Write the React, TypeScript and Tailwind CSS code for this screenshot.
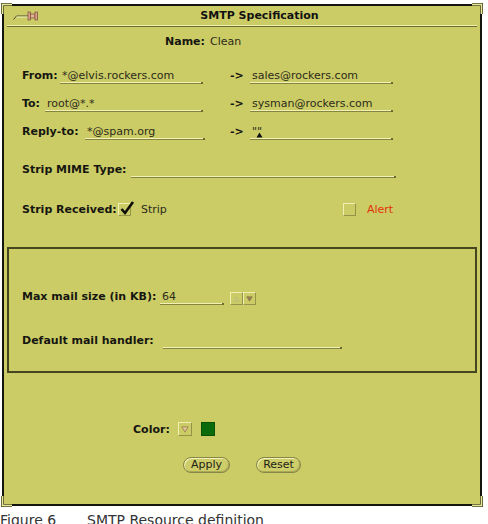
import React from "react";

type FieldProps = { w: string; text?: string; caret?: boolean };

// Underlined text field: light rule over a dark one, with a small end cap.
function Field({ w, text = "", caret = false }: FieldProps) {
  return (
    <div className={`relative flex flex-col shrink-0 ${w}`}>
      <div className="h-[13px] pl-[2px] leading-[13px] text-[11px] text-[#2b2b1a] whitespace-nowrap">
        {text}
      </div>
      <div className="h-px bg-[#f1f1b4]" />
      <div className="h-px bg-[#858540]" />
      <div className="absolute right-0 bottom-0 w-[2px] h-[2px] bg-[#6a6a30]" />
      {caret && (
        <svg className="absolute left-[6px] top-[7px]" width="7" height="6" viewBox="0 0 7 6">
          <path d="M3.5 0.5 L6.5 5.5 L0.5 5.5 Z" fill="#111" />
        </svg>
      )}
    </div>
  );
}

function Label({ w, children }: { w: string; children: React.ReactNode }) {
  return (
    <div className={`shrink-0 h-[13px] leading-[13px] text-[11px] font-bold text-[#161610] whitespace-nowrap ${w}`}>
      {children}
    </div>
  );
}

function Arrow() {
  return (
    <div className="w-[20px] shrink-0 h-[13px] leading-[13px] text-[11px] font-bold text-[#161610]">-&gt;</div>
  );
}

function Pushpin() {
  return (
    <svg className="ml-[9px] shrink-0" width="26" height="10" viewBox="0 0 26 10">
      <path d="M0.5 8.5 L3.5 5 L15 5" stroke="#4a4a35" strokeWidth="1" fill="none" />
      <path d="M3.5 6 L15 6" stroke="#f0f0b8" strokeWidth="1" fill="none" />
      <rect x="15" y="1" width="2.5" height="8" fill="#d9a385" stroke="#7a4a38" strokeWidth="0.7" />
      <rect x="17.5" y="3" width="4.5" height="4" fill="#e2b396" stroke="#7a4a38" strokeWidth="0.7" />
      <rect x="22" y="1" width="2.5" height="8" fill="#d9a385" stroke="#7a4a38" strokeWidth="0.7" />
    </svg>
  );
}

// Resize handles drawn over the window frame corners.
function Corners() {
  return (
    <>
      <svg className="absolute left-[-3px] top-[-3px]" width="12" height="12" viewBox="0 0 12 12">
        <path d="M1.5 11 L1.5 1.5 L11 1.5" stroke="#4a4a24" strokeWidth="3" fill="none" />
        <path d="M1.5 11 L1.5 1.5 L11 1.5" stroke="#e9e99c" strokeWidth="1.4" fill="none" />
      </svg>
      <svg className="absolute right-[-3px] top-[-3px]" width="12" height="12" viewBox="0 0 12 12">
        <path d="M1 1.5 L10.5 1.5 L10.5 11" stroke="#4a4a24" strokeWidth="3" fill="none" />
        <path d="M1 1.5 L10.5 1.5 L10.5 11" stroke="#e9e99c" strokeWidth="1.4" fill="none" />
      </svg>
      <svg className="absolute left-[-3px] bottom-[-3px]" width="12" height="12" viewBox="0 0 12 12">
        <path d="M1.5 1 L1.5 10.5 L11 10.5" stroke="#4a4a24" strokeWidth="3" fill="none" />
        <path d="M1.5 1 L1.5 10.5 L11 10.5" stroke="#e9e99c" strokeWidth="1.4" fill="none" />
      </svg>
      <svg className="absolute right-[-3px] bottom-[-3px]" width="12" height="12" viewBox="0 0 12 12">
        <path d="M10.5 1 L10.5 10.5 L1 10.5" stroke="#4a4a24" strokeWidth="3" fill="none" />
        <path d="M10.5 1 L10.5 10.5 L1 10.5" stroke="#e9e99c" strokeWidth="1.4" fill="none" />
      </svg>
    </>
  );
}

const bevel =
  "border border-t-[#f0f0b2] border-l-[#f0f0b2] border-b-[#949448] border-r-[#949448]";

function CheckBox({ checked }: { checked: boolean }) {
  return (
    <div className={`relative w-[13px] h-[13px] shrink-0 ${bevel}`}>
      {checked && (
        <svg className="absolute left-[0px] top-[-4px]" width="16" height="16" viewBox="0 0 16 16">
          <path d="M2.5 9 L6 13 L14 2" stroke="#0d0d0a" strokeWidth="2.6" fill="none" strokeLinejoin="miter" />
        </svg>
      )}
    </div>
  );
}

function OvalButton({ w, children }: { w: string; children: React.ReactNode }) {
  return (
    <button
      className={`${w} h-[16px] rounded-full border border-[#86864a] bg-[#cdcd6a] shadow-[inset_1px_1px_0_#f2f2b6,inset_-1px_-1px_0_#a9a955] text-[11px] leading-[14px] text-[#1e1e16]`}
    >
      {children}
    </button>
  );
}

export default function App() {
  return (
    <div className="w-[488px] h-[524px] bg-white overflow-hidden font-['DejaVu_Sans',sans-serif]">
      <div className="relative ml-[2px] mt-[4px] w-[480px] h-[502px] border-2 border-[#151510] bg-[#cccc66] flex flex-col">
        <Corners />

        {/* Title bar */}
        <div className="h-[19px] flex items-center">
          <Pushpin />
          <div className="flex-1 text-center text-[11px] leading-[13px] font-bold text-[#111]">SMTP Specification</div>
        </div>
        <div className="mx-[3px] h-px bg-[#efefae]" />
        <div className="mx-[3px] h-px bg-[#6b6b2e]" />

        {/* Name */}
        <div className="mt-[8px] pl-[161px] flex items-start gap-[5px]">
          <Label w="">Name:</Label>
          <div className="h-[13px] leading-[13px] text-[11px] text-[#2b2b1a]">Clean</div>
        </div>

        {/* Address mappings */}
        <div className="mt-[21px] pl-[18px] flex items-start">
          <div className="w-[208px] shrink-0 flex items-start">
            <Label w="w-[38px]">From:</Label>
            <Field w="w-[143px]" text="*@elvis.rockers.com" />
          </div>
          <Arrow />
          <Field w="w-[143px]" text="sales@rockers.com" />
        </div>

        <div className="mt-[13px] pl-[18px] flex items-start">
          <div className="w-[208px] shrink-0 flex items-start">
            <Label w="w-[23px]">To:</Label>
            <Field w="w-[158px]" text="root@*.*" />
          </div>
          <Arrow />
          <Field w="w-[143px]" text="sysman@rockers.com" />
        </div>

        <div className="mt-[13px] pl-[18px] flex items-start">
          <div className="w-[208px] shrink-0 flex items-start">
            <Label w="w-[63px]">Reply-to:</Label>
            <Field w="w-[120px]" text="*@spam.org" />
          </div>
          <Arrow />
          <Field w="w-[143px]" text={'""'} caret />
        </div>

        {/* Strip MIME type */}
        <div className="mt-[23px] pl-[18px] flex items-start">
          <Label w="w-[109px]">Strip MIME Type:</Label>
          <Field w="w-[265px]" />
        </div>

        {/* Strip received */}
        <div className="mt-[25px] pl-[18px] flex items-center h-[13px]">
          <div className="w-[321px] shrink-0 flex items-center">
            <Label w="w-[96px]">Strip Received:</Label>
            <CheckBox checked />
            <div className="ml-[10px] text-[11px] leading-[13px] text-[#2b2b1a]">Strip</div>
          </div>
          <CheckBox checked={false} />
          <div className="ml-[11px] text-[11px] leading-[13px] text-[#e0330d]">Alert</div>
        </div>

        {/* Size / handler group */}
        <div className="mt-[31px] mx-[3px] h-[126px] border-2 border-[#45451f] flex flex-col pl-[13px]">
          <div className="mt-[41px] flex items-start">
            <Label w="w-[138px]">Max mail size (in KB):</Label>
            <Field w="w-[64px]" text="64" />
            <div className="ml-[6px] mt-[2px] flex">
              <div className={`w-[13px] h-[13px] flex items-center justify-center ${bevel}`}>
                <svg width="7" height="6" viewBox="0 0 7 6">
                  <path d="M3.5 0.8 L6.2 5.2 L0.8 5.2 Z" fill="none" stroke="#b7b780" strokeWidth="0.8" />
                </svg>
              </div>
              <div className={`w-[13px] h-[13px] flex items-center justify-center ${bevel}`}>
                <svg width="7" height="6" viewBox="0 0 7 6">
                  <path d="M0.8 0.8 L6.2 0.8 L3.5 5.2 Z" fill="#9a8258" stroke="#7d6440" strokeWidth="0.6" />
                </svg>
              </div>
            </div>
          </div>
          <div className="mt-[29px] flex items-start">
            <Label w="w-[141px]">Default mail handler:</Label>
            <Field w="w-[179px]" />
          </div>
        </div>

        {/* Color */}
        <div className="mt-[49px] pl-[129px] flex items-center h-[14px]">
          <Label w="w-[45px]">Color:</Label>
          <div className={`w-[14px] h-[14px] flex items-center justify-center ${bevel}`}>
            <svg width="8" height="7" viewBox="0 0 8 7">
              <path d="M0.8 0.8 L7.2 0.8 L4 6.2 Z" fill="#dcc58e" stroke="#9a7c55" strokeWidth="0.8" />
            </svg>
          </div>
          <div className="ml-[9px] w-[14px] h-[14px] bg-[#0b6b0b] border border-[#075207]" />
        </div>

        {/* Actions */}
        <div className="mt-[21px] pl-[179px] flex items-center gap-[26px]">
          <OvalButton w="w-[47px]">Apply</OvalButton>
          <OvalButton w="w-[45px]">Reset</OvalButton>
        </div>
      </div>

      <div className="mt-[6px] flex text-[14px] leading-[16px] text-[#333]">
        <div className="w-[87px] shrink-0">Figure 6</div>
        <div>SMTP Resource definition</div>
      </div>
    </div>
  );
}
